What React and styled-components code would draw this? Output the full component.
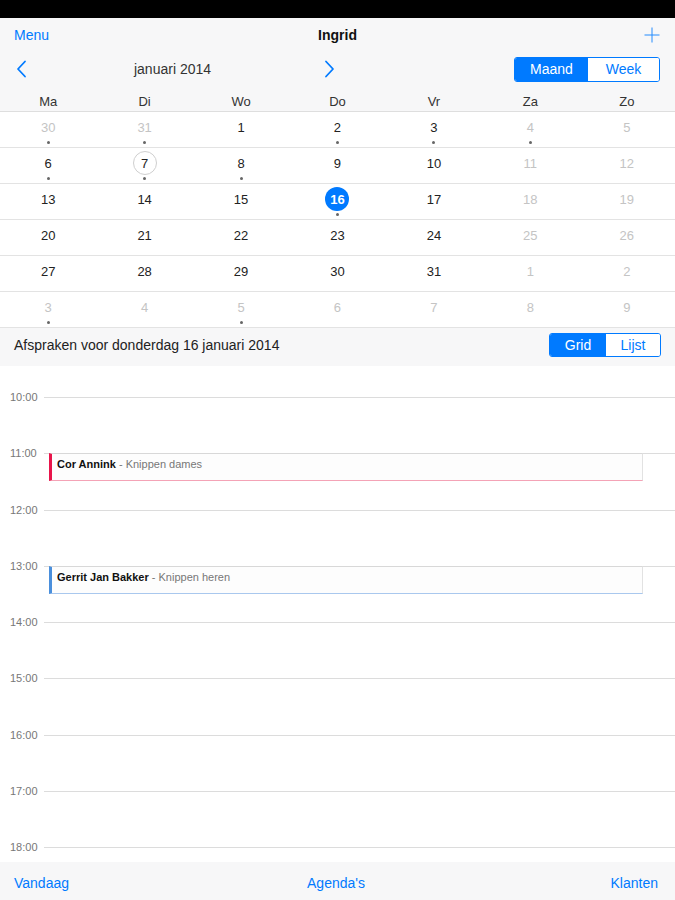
import styled, { createGlobalStyle } from "styled-components";

const BLUE = "#007aff";

const GlobalStyle = createGlobalStyle`
  html, body {
    margin: 0;
    padding: 0;
    background: #ffffff;
  }
  body {
    font-family: "Liberation Sans", Helvetica, Arial, sans-serif;
    color: #222;
    -webkit-font-smoothing: antialiased;
  }
`;

const Page = styled.div`
  width: 675px;
  height: 900px;
  display: flex;
  flex-direction: column;
  overflow: hidden;
  background: #fff;
`;

const StatusBar = styled.div`
  height: 18px;
  background: #000;
  flex-shrink: 0;
`;

const NavBar = styled.header`
  height: 34px;
  flex-shrink: 0;
  display: grid;
  grid-template-columns: 1fr auto 1fr;
  align-items: center;
  padding: 0 14px;
  background: #f7f7f8;
`;

const LinkText = styled.span`
  color: ${BLUE};
  font-size: 14px;
  justify-self: ${(p) => p.$align || "start"};
`;

const Title = styled.span`
  font-weight: 600;
  color: #111;
  font-size: 14px;
`;

const PlusButton = styled.span`
  justify-self: end;
  display: flex;
  margin-right: 1px;
  opacity: 0.85;
`;

const MonthBar = styled.div`
  height: 34px;
  flex-shrink: 0;
  display: flex;
  align-items: center;
  justify-content: space-between;
  background: #f7f7f8;
  padding-right: 15px;
`;

const MonthNav = styled.div`
  width: 340px;
  box-sizing: border-box;
  padding: 0 5px 0 16px;
  display: flex;
  align-items: center;
  justify-content: space-between;
`;

const MonthLabel = styled.span`
  font-size: 14px;
  color: #333;
  margin-right: 6px;
`;

const Segmented = styled.div`
  display: flex;
  border: 1px solid ${BLUE};
  border-radius: 3px;
  overflow: hidden;
  height: ${(p) => p.$height}px;
  box-sizing: border-box;
`;

const Segment = styled.span`
  width: ${(p) => p.$width}px;
  display: flex;
  align-items: center;
  justify-content: center;
  font-size: 14px;
  color: ${(p) => (p.$active ? "#fff" : BLUE)};
  background: ${(p) => (p.$active ? BLUE : "#fff")};
`;

const WeekHeader = styled.div`
  height: 25px;
  flex-shrink: 0;
  display: grid;
  grid-template-columns: repeat(7, 1fr);
  align-items: center;
  background: #f7f7f8;
  border-bottom: 1px solid #dedede;
`;

const WeekdayLabel = styled.span`
  text-align: center;
  font-size: 13px;
  color: #333;
  padding-top: 6px;
`;

const MonthGrid = styled.div`
  flex-shrink: 0;
  display: grid;
  grid-template-columns: repeat(7, 1fr);
  grid-auto-rows: 36px;
  background: #fff;
`;

const DayCell = styled.div`
  display: flex;
  flex-direction: column;
  align-items: center;
  border-bottom: 1px solid #e3e3e3;
  box-sizing: border-box;
`;

const DayNumber = styled.span`
  width: 24px;
  height: 24px;
  margin-top: 3px;
  border-radius: 50%;
  display: flex;
  align-items: center;
  justify-content: center;
  box-sizing: border-box;
  font-size: 13px;
  color: ${(p) => (p.$selected ? "#fff" : p.$muted ? "#c4c4c4" : "#222")};
  font-weight: ${(p) => (p.$selected ? 700 : 400)};
  background: ${(p) => (p.$selected ? BLUE : "transparent")};
  border: ${(p) => (p.$today ? "1px solid #cfcfcf" : "none")};
`;

const Dot = styled.span`
  width: 3px;
  height: 3px;
  margin-top: 2px;
  border-radius: 50%;
  background: ${(p) => (p.$show ? "#666" : "transparent")};
`;

const DayBar = styled.div`
  height: 38px;
  flex-shrink: 0;
  box-sizing: border-box;
  display: flex;
  align-items: center;
  justify-content: space-between;
  padding: 0 14px 4px 14px;
  background: #f7f7f8;
`;

const DayTitle = styled.span`
  font-size: 14px;
  color: #222;
`;

const Timeline = styled.div`
  flex: 1;
  overflow: hidden;
  padding-top: 31px;
  background: #fff;
`;

const HourRow = styled.div`
  position: relative;
  height: 56.25px;
  display: grid;
  grid-template-columns: 44px 1fr;
  align-items: start;
`;

const HourLabel = styled.span`
  font-size: 11px;
  line-height: 12px;
  margin-top: -6px;
  padding-left: 10px;
  color: #777;
`;

const HourLine = styled.div`
  border-top: 1px solid #dcdcdc;
`;

const Event = styled.div`
  position: absolute;
  top: 0;
  left: 49px;
  right: 32px;
  box-sizing: border-box;
  background: #fdfdfd;
  border-top: 1px solid #d8d8d8;
  border-left: 3px solid ${(p) => p.$color};
  border-bottom: 1px solid ${(p) => p.$light};
  border-right: 1px solid #e2e2e2;
  padding: 3px 0 0 5px;
  font-size: 11px;
  line-height: 14px;
  color: #777;
  white-space: nowrap;
`;

const EventName = styled.span`
  color: #111;
  font-weight: 700;
`;

const TabBar = styled.footer`
  height: 38px;
  flex-shrink: 0;
  box-sizing: border-box;
  display: grid;
  grid-template-columns: 1fr auto 1fr;
  align-items: center;
  padding: 3px 17px 0 14px;
  background: #f7f7f8;
`;

const Chevron = ({ dir }) => (
  <svg width="12" height="18" viewBox="0 0 12 18" fill="none">
    <polyline
      points={dir === "left" ? "9,1.5 2,9 9,16.5" : "3,1.5 10,9 3,16.5"}
      stroke={BLUE}
      strokeWidth="1.8"
      strokeLinecap="round"
      strokeLinejoin="round"
    />
  </svg>
);

const PlusIcon = () => (
  <svg width="16" height="16" viewBox="0 0 16 16">
    <line x1="8" y1="0.5" x2="8" y2="15.5" stroke={BLUE} strokeWidth="1" />
    <line x1="0.5" y1="8" x2="15.5" y2="8" stroke={BLUE} strokeWidth="1" />
  </svg>
);

const weekdays = ["Ma", "Di", "Wo", "Do", "Vr", "Za", "Zo"];

// [day, inMonth]
const buildDays = () => {
  const days = [[30, false], [31, false]];
  for (let d = 1; d <= 31; d++) days.push([d, true]);
  for (let d = 1; d <= 9; d++) days.push([d, false]);
  return days;
};

const dotted = new Set([0, 1, 3, 4, 5, 7, 8, 9, 17, 35, 37]);

const hours = ["10:00", "11:00", "12:00", "13:00", "14:00", "15:00", "16:00", "17:00", "18:00"];

const events = {
  "11:00": { name: "Cor Annink", what: "Knippen dames", color: "#e8154b", light: "#f4a3b6", dur: 0.5 },
  "13:00": { name: "Gerrit Jan Bakker", what: "Knippen heren", color: "#4a8fdc", light: "#a9c8ee", dur: 0.5 },
};

export default function App() {
  const days = buildDays();

  return (
    <>
      <GlobalStyle />
      <Page>
        <StatusBar />
        <NavBar>
          <LinkText>Menu</LinkText>
          <Title>Ingrid</Title>
          <PlusButton>
            <PlusIcon />
          </PlusButton>
        </NavBar>

        <MonthBar>
          <MonthNav>
            <Chevron dir="left" />
            <MonthLabel>januari 2014</MonthLabel>
            <Chevron dir="right" />
          </MonthNav>
          <Segmented $height={25}>
            <Segment $active $width={73}>Maand</Segment>
            <Segment $width={71}>Week</Segment>
          </Segmented>
        </MonthBar>

        <WeekHeader>
          {weekdays.map((w) => (
            <WeekdayLabel key={w}>{w}</WeekdayLabel>
          ))}
        </WeekHeader>

        <MonthGrid>
          {days.map(([d, inMonth], i) => {
            const weekend = i % 7 >= 5;
            const selected = inMonth && d === 16;
            return (
              <DayCell key={i}>
                <DayNumber
                  $muted={!inMonth || weekend}
                  $selected={selected}
                  $today={inMonth && d === 7}
                >
                  {d}
                </DayNumber>
                <Dot $show={dotted.has(i)} />
              </DayCell>
            );
          })}
        </MonthGrid>

        <DayBar>
          <DayTitle>Afspraken voor donderdag 16 januari 2014</DayTitle>
          <Segmented $height={24}>
            <Segment $active $width={56}>Grid</Segment>
            <Segment $width={54}>Lijst</Segment>
          </Segmented>
        </DayBar>

        <Timeline>
          {hours.map((h) => {
            const ev = events[h];
            return (
              <HourRow key={h}>
                <HourLabel>{h}</HourLabel>
                <HourLine />
                {ev && (
                  <Event
                    $color={ev.color}
                    $light={ev.light}
                    style={{ height: `${ev.dur * 56.25}px` }}
                  >
                    <EventName>{ev.name}</EventName> - {ev.what}
                  </Event>
                )}
              </HourRow>
            );
          })}
        </Timeline>

        <TabBar>
          <LinkText>Vandaag</LinkText>
          <LinkText>Agenda's</LinkText>
          <LinkText $align="end">Klanten</LinkText>
        </TabBar>
      </Page>
    </>
  );
}
